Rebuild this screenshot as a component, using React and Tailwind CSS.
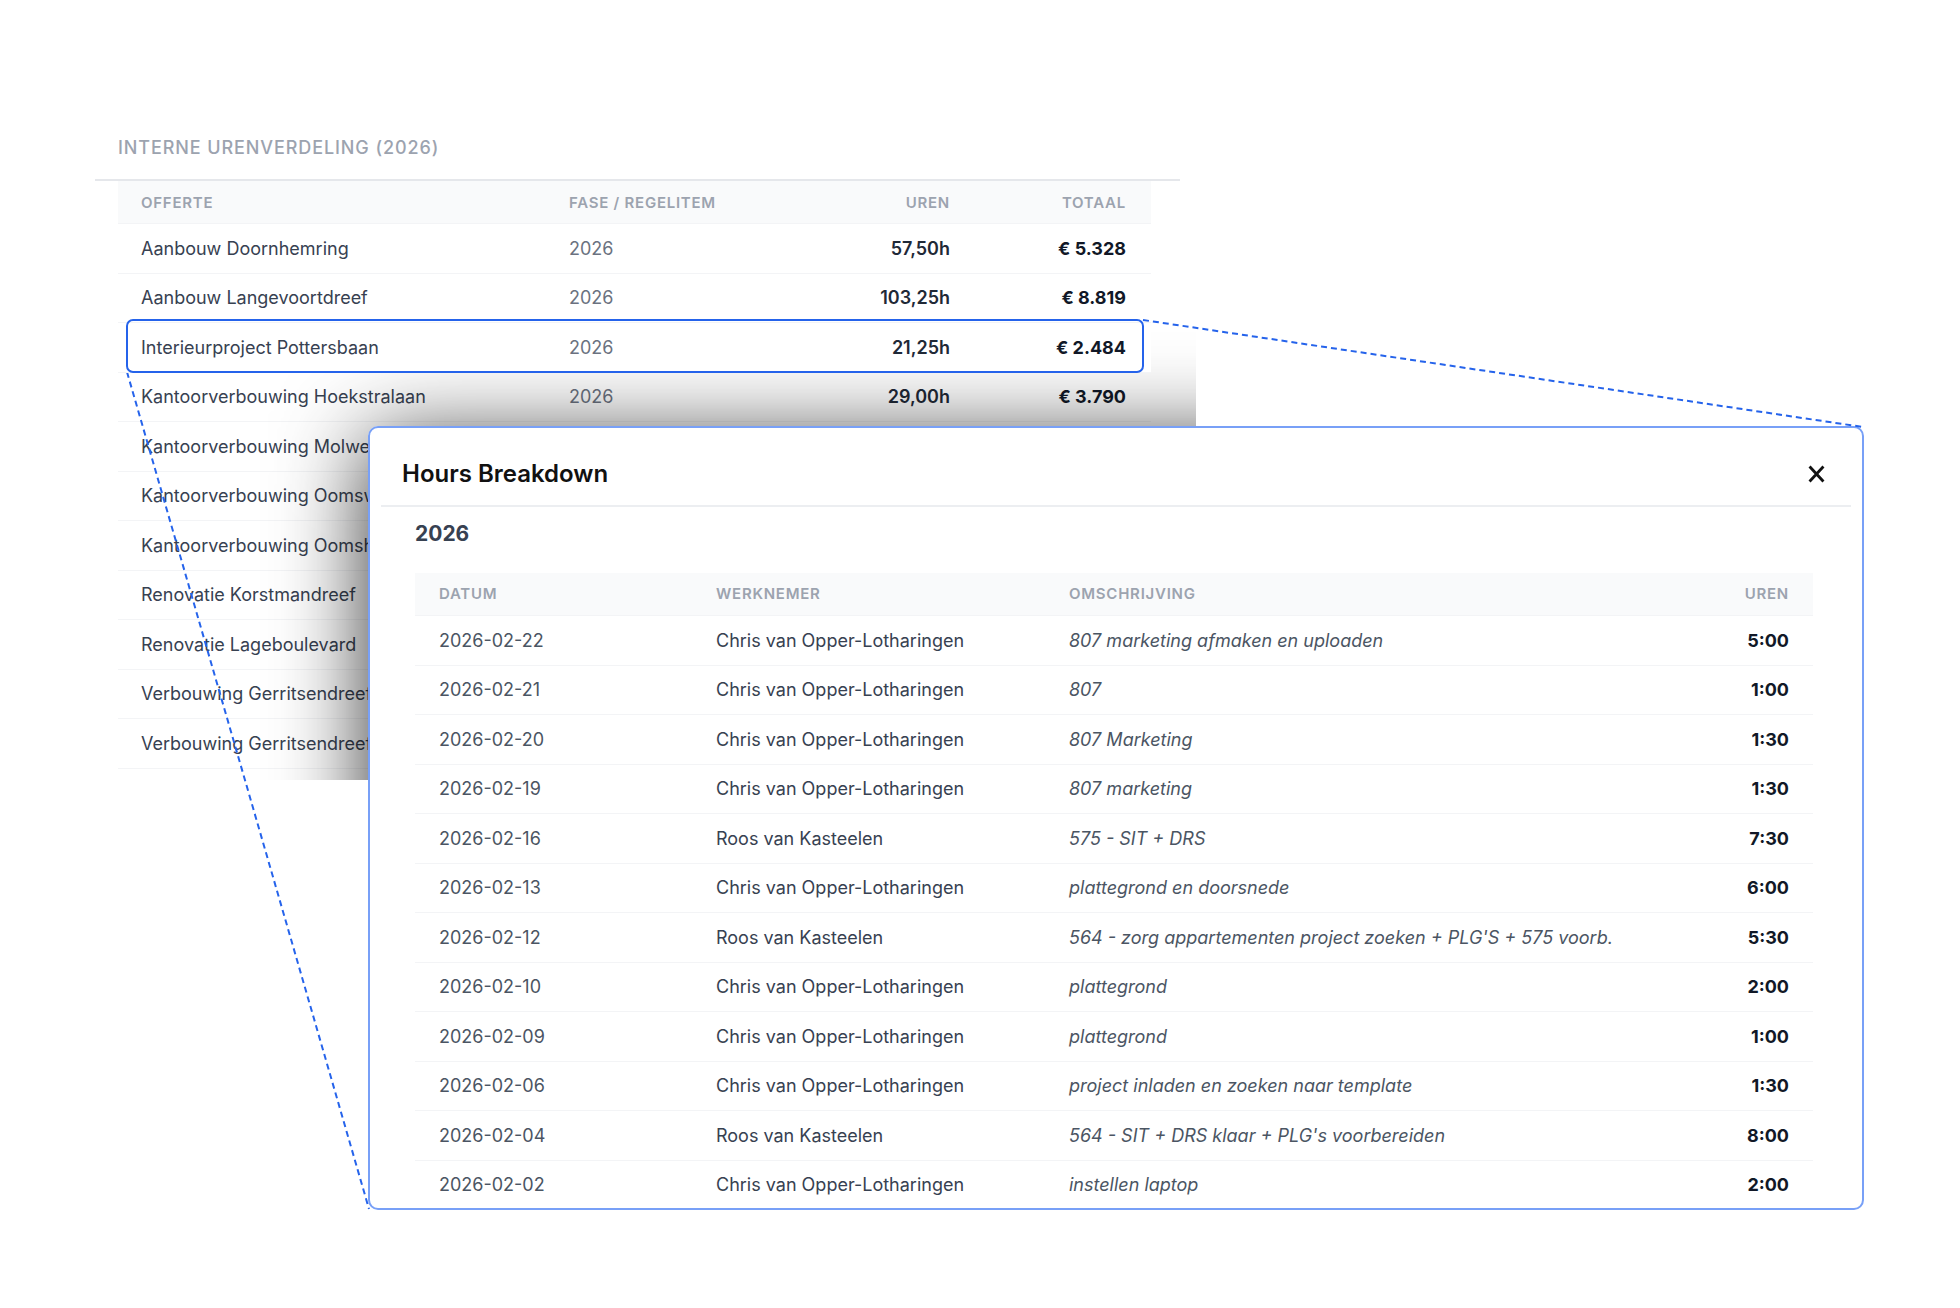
import React from "react";

const offertes = [
  { naam: "Aanbouw Doornhemring", fase: "2026", uren: "57,50h", totaal: "€ 5.328" },
  { naam: "Aanbouw Langevoortdreef", fase: "2026", uren: "103,25h", totaal: "€ 8.819" },
  { naam: "Interieurproject Pottersbaan", fase: "2026", uren: "21,25h", totaal: "€ 2.484", actief: true },
  { naam: "Kantoorverbouwing Hoekstralaan", fase: "2026", uren: "29,00h", totaal: "€ 3.790" },
  { naam: "Kantoorverbouwing Molwerk" },
  { naam: "Kantoorverbouwing Oomsweg" },
  { naam: "Kantoorverbouwing Oomshof" },
  { naam: "Renovatie Korstmandreef" },
  { naam: "Renovatie Lageboulevard" },
  { naam: "Verbouwing Gerritsendreef" },
  { naam: "Verbouwing Gerritsendreef Oost" },
];

const CHRIS = "Chris van Opper-Lotharingen";
const ROOS = "Roos van Kasteelen";

const regels = [
  { datum: "2026-02-22", wie: CHRIS, wat: "807 marketing afmaken en uploaden", uren: "5:00" },
  { datum: "2026-02-21", wie: CHRIS, wat: "807", uren: "1:00" },
  { datum: "2026-02-20", wie: CHRIS, wat: "807 Marketing", uren: "1:30" },
  { datum: "2026-02-19", wie: CHRIS, wat: "807 marketing", uren: "1:30" },
  { datum: "2026-02-16", wie: ROOS, wat: "575 - SIT + DRS", uren: "7:30" },
  { datum: "2026-02-13", wie: CHRIS, wat: "plattegrond en doorsnede", uren: "6:00" },
  { datum: "2026-02-12", wie: ROOS, wat: "564 - zorg appartementen project zoeken + PLG'S + 575 voorb.", uren: "5:30" },
  { datum: "2026-02-10", wie: CHRIS, wat: "plattegrond", uren: "2:00" },
  { datum: "2026-02-09", wie: CHRIS, wat: "plattegrond", uren: "1:00" },
  { datum: "2026-02-06", wie: CHRIS, wat: "project inladen en zoeken naar template", uren: "1:30" },
  { datum: "2026-02-04", wie: ROOS, wat: "564 - SIT + DRS klaar + PLG's voorbereiden", uren: "8:00" },
  { datum: "2026-02-02", wie: CHRIS, wat: "instellen laptop", uren: "2:00" },
];

function CloseIcon() {
  return (
    <svg width="17" height="18" viewBox="0 0 17 18" fill="none" stroke="#111111" strokeWidth="2.8" strokeLinecap="square">
      <path d="M2.5 2.5L14.5 15.5M14.5 2.5L2.5 15.5" />
    </svg>
  );
}

function OfferteRij({ rij }) {
  return (
    <div
      className={
        "grid grid-cols-[427px_250px_179px_177px] h-[49.5px] items-center border-b border-[#f3f4f6] text-[18px] " +
        (rij.actief ? "relative z-10 bg-white" : "")
      }
    >
      {rij.actief && (
        <div className="absolute left-[8px] right-[7px] -top-[4px] -bottom-[1px] rounded-[7px] border-2 border-[#2563eb]" />
      )}
      <div className="pl-[23px] text-[#374151] whitespace-nowrap">{rij.naam}</div>
      <div className="pl-[24px] text-[#6b7280]">{rij.fase}</div>
      <div className="pr-[24px] text-right font-semibold text-[#1f2937]">{rij.uren}</div>
      <div className="pr-[25px] text-right font-bold text-[#111827]">{rij.totaal}</div>
    </div>
  );
}

function UrenRij({ r }) {
  return (
    <div className="grid grid-cols-[277px_353px_1fr_140px] h-[49.5px] items-center border-b border-[#f3f4f6] text-[18px]">
      <div className="pl-[24px] text-[#4b5563]">{r.datum}</div>
      <div className="pl-[24px] text-[#374151]">{r.wie}</div>
      <div className="pl-[24px] italic text-[#4b5563] whitespace-nowrap">{r.wat}</div>
      <div className="pr-[24px] text-right font-bold text-[#111827]">{r.uren}</div>
    </div>
  );
}

export default function App() {
  return (
    <div className="relative w-[1960px] h-[1308px] overflow-hidden bg-white font-['Inter','Noto_Sans',sans-serif]">
      {/* report panel behind the dialog */}
      <div className="relative ml-[95px] mt-[110px] w-[1101px] h-[670px] overflow-hidden bg-white">
        <div className="pl-[23px] pt-[26px] pb-[19px] text-[18px] leading-[24px] font-medium tracking-[0.05em] text-[#9ca3af]">
          INTERNE URENVERDELING (2026)
        </div>
        <div className="w-[1085px] h-[2px] bg-[#e5e7eb]" />
        <div className="ml-[23px] w-[1033px]">
          <div className="grid grid-cols-[427px_250px_179px_177px] h-[43px] pt-[2px] items-center bg-[#f9fafb] border-b border-[#f3f4f6] text-[15px] font-semibold tracking-[0.05em] text-[#9ca3af]">
            <div className="pl-[23px]">OFFERTE</div>
            <div className="pl-[24px]">FASE / REGELITEM</div>
            <div className="pr-[24px] text-right">UREN</div>
            <div className="pr-[25px] text-right">TOTAAL</div>
          </div>
          {offertes.map((rij) => (
            <OfferteRij key={rij.naam} rij={rij} />
          ))}
        </div>
        {/* dialog drop shadow, clipped to the panel */}
        <div className="absolute left-[273px] top-[316px] w-[1496px] h-[784px] rounded-[10px] shadow-[0_14px_90px_rgba(0,0,0,0.8)]" />
      </div>

      {/* Hours breakdown dialog */}
      <div className="absolute left-[368px] top-[426px] w-[1496px] h-[784px] overflow-hidden rounded-[10px] border-2 border-[#78a0f7] bg-white">
        <div className="flex items-center justify-between pl-[32px] pr-[37px] pt-[30px] pb-[15px]">
          <div className="text-[24px] leading-[32px] font-semibold text-[#111111]">Hours Breakdown</div>
          <CloseIcon />
        </div>
        <div className="mx-[11px] h-[2px] bg-[#eceef1]" />
        <div className="pl-[45px] pr-[49px]">
          <div className="mt-[13px] mb-[25px] text-[21px] leading-[28px] font-bold text-[#374151]">2026</div>
          <div className="grid grid-cols-[277px_353px_1fr_140px] h-[43px] items-center bg-[#f9fafb] border-b border-[#f3f4f6] text-[15px] font-semibold tracking-[0.05em] text-[#9ca3af]">
            <div className="pl-[24px]">DATUM</div>
            <div className="pl-[24px]">WERKNEMER</div>
            <div className="pl-[24px]">OMSCHRIJVING</div>
            <div className="pr-[24px] text-right">UREN</div>
          </div>
          {regels.map((r) => (
            <UrenRij key={r.datum} r={r} />
          ))}
        </div>
      </div>

      {/* dashed connectors from the selected row to the dialog */}
      <svg className="absolute left-0 top-0 pointer-events-none" width="1960" height="1308" viewBox="0 0 1960 1308" fill="none">
        <line x1="1143" y1="320" x2="1863" y2="427" stroke="#2563eb" strokeWidth="2" strokeDasharray="6 4" />
        <line x1="127" y1="372" x2="369" y2="1209" stroke="#2563eb" strokeWidth="2" strokeDasharray="6 4" />
      </svg>
    </div>
  );
}
